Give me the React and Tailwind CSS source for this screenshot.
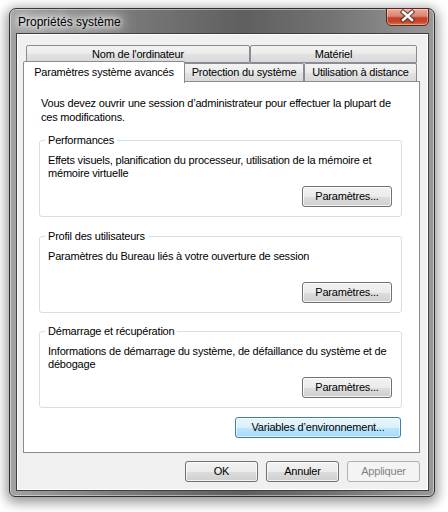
import React from 'react';

const BTN =
  'h-[21px] rounded-[3px] border text-[11px] tracking-[-0.2px] flex items-center justify-center';
const BTN_NORMAL =
  'border-[#707070] text-black bg-[linear-gradient(#f2f2f2_0%,#ebebeb_50%,#dddddd_51%,#cfcfcf_100%)] shadow-[inset_0_0_0_1px_rgba(255,255,255,0.75)]';
const BTN_FOCUS =
  'border-[#3c7fb1] text-black bg-[linear-gradient(#eaf6fd_0%,#d9f0fc_50%,#bee6fd_51%,#a7d9f5_100%)] shadow-[inset_0_0_0_1px_rgba(255,255,255,0.6)]';
const BTN_DISABLED = 'border-[#adb2b5] text-[#838383] bg-[#f4f4f4]';

const TAB =
  'h-[18px] border border-[#898c95] rounded-t-[2px] flex items-center justify-center text-[11px] tracking-[-0.2px] text-black bg-[linear-gradient(#f3f3f3_0%,#ebebeb_50%,#e2e2e2_51%,#d9d9d9_100%)]';

function Group({ title, children }) {
  return (
    <fieldset className="w-[363px] ml-[15px] border border-[#d5dfe5] rounded-[3px]">
      <legend className="ml-[5px] px-[3px] text-[11px] leading-[13px] tracking-[-0.2px] text-black">
        {title}
      </legend>
      <div className="h-[69px] flex flex-col pt-[7px] pl-[8px] pr-[9px] pb-[9px]">
        <p className="text-[11px] leading-[13px] tracking-[-0.2px] text-black">{children}</p>
        <div className="mt-auto flex justify-end">
          <button className={`${BTN} ${BTN_NORMAL} w-[90px]`}>Paramètres...</button>
        </div>
      </div>
    </fieldset>
  );
}

export default function App() {
  return (
    <div className="w-[448px] h-[512px] bg-white pt-[8px] pl-[9px] font-['Liberation_Sans',Arial,sans-serif] overflow-hidden">
      <div className="w-[426px] h-[489px] rounded-t-[7px] rounded-b-[6px] border border-[#2e2e2e] bg-[linear-gradient(90deg,#a2a2a2_0%,#7c7c7c_25%,#5f5f5f_55%,#727272_75%,#989898_100%)] shadow-[0_3px_12px_3px_rgba(0,0,0,0.4),inset_0_0_0_1px_rgba(255,255,255,0.45)] flex flex-col pl-[6px] pr-[5px] pb-[5px]">
        {/* title bar */}
        <div className="h-[24px] flex items-start justify-between">
          <span className="ml-[2px] mt-[6px] text-[12px] leading-[14px] text-black [text-shadow:0_0_5px_#fff,0_0_9px_#fff,0_0_14px_#fff,0_0_18px_#fff,0_0_22px_#fff]">
            Propriétés système
          </span>
          <div className="w-[43px] h-[18px] -mt-[1px] rounded-b-[5px] border border-[#5e2418] bg-[linear-gradient(#e9ab9c_0%,#d98571_45%,#c4422a_55%,#c4462b_80%,#dc7552_100%)] shadow-[inset_0_0_0_1px_rgba(255,255,255,0.35)]">
            <svg width="41" height="16" viewBox="0 0 41 16">
              <path d="M16 3 L25 11 M25 3 L16 11" stroke="#4a2a22" strokeWidth="4.6" strokeLinecap="square" opacity="0.75" />
              <path d="M16 3 L25 11 M25 3 L16 11" stroke="#ffffff" strokeWidth="2.4" strokeLinecap="square" />
            </svg>
          </div>
        </div>

        {/* client area */}
        <div className="flex-1 border border-[#3f3f3f] bg-[#f0f0f0] shadow-[inset_0_0_0_1px_#ffffff] flex flex-col">
          {/* tabs */}
          <div className="mt-[11px] ml-[9px] w-[391px]">
            <div className="flex">
              <div className={`${TAB} w-[224px]`}>Nom de l'ordinateur</div>
              <div className={`${TAB} w-[167px]`}>Matériel</div>
            </div>
            <div className="flex h-[18px]">
              <div className="relative z-10 self-start -mt-[2px] -ml-[3px] -mr-[1px] w-[162px] h-[22px] border border-b-0 border-[#898c95] rounded-t-[2px] bg-white flex items-center justify-center pb-[1px] text-[11px] tracking-[-0.2px] text-black">
                Paramètres système avancés
              </div>
              <div className={`${TAB} border-b-0 w-[120px]`}>Protection du système</div>
              <div className={`${TAB} border-b-0 flex-1`}>Utilisation à distance</div>
            </div>
          </div>

          {/* tab page */}
          <div className="ml-[6px] w-[397px] h-[372px] border border-[#898c95] bg-white pt-[14px]">
            <p className="ml-[17px] w-[360px] text-[11px] leading-[14px] tracking-[-0.2px] text-black">
              Vous devez ouvrir une session d’administrateur pour effectuer la plupart de ces modifications.
            </p>

            <div className="mt-[10px]">
              <Group title="Performances">
                Effets visuels, planification du processeur, utilisation de la mémoire et mémoire virtuelle
              </Group>
            </div>
            <div className="mt-[13px]">
              <Group title="Profil des utilisateurs">
                Paramètres du Bureau liés à votre ouverture de session
              </Group>
            </div>
            <div className="mt-[12px]">
              <Group title="Démarrage et récupération">
                Informations de démarrage du système, de défaillance du système et de débogage
              </Group>
            </div>

            <div className="mt-[9px] mr-[18px] flex justify-end">
              <button className={`${BTN} ${BTN_FOCUS} w-[166px]`}>Variables d’environnement...</button>
            </div>
          </div>

          {/* dialog buttons */}
          <div className="mt-[8px] mr-[8px] flex justify-end gap-[8px]">
            <button className={`${BTN} ${BTN_NORMAL} w-[73px]`}>OK</button>
            <button className={`${BTN} ${BTN_NORMAL} w-[73px]`}>Annuler</button>
            <button className={`${BTN} ${BTN_DISABLED} w-[73px]`}>Appliquer</button>
          </div>
        </div>
      </div>
    </div>
  );
}
